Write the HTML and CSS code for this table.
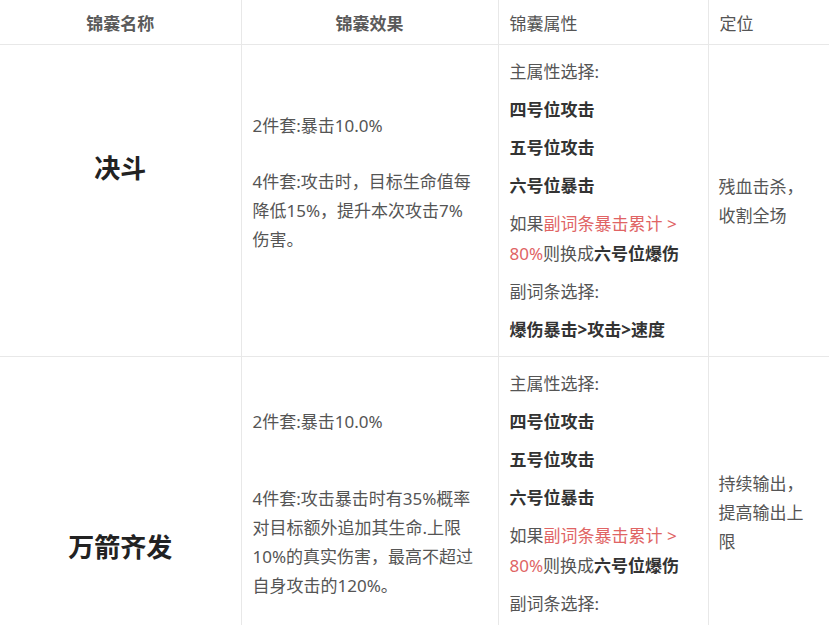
FILE: index.html
```html
<!DOCTYPE html>
<html lang="zh">
<head>
<meta charset="utf-8">
<title>锦囊</title>
<link rel="stylesheet" href="styles.css">
</head>
<body>
<table class="grid">
  <colgroup>
    <col class="c-name">
    <col class="c-effect">
    <col class="c-attr">
    <col class="c-role">
  </colgroup>
  <thead>
    <tr>
      <th class="h-center">锦囊名称</th>
      <th class="h-center">锦囊效果</th>
      <th class="h-left">锦囊属性</th>
      <th class="h-left">定位</th>
    </tr>
  </thead>
  <tbody>
    <tr>
      <td class="name name-a">决斗</td>
      <td class="effect effect-a">
        <p class="set2 set2-a">2件套:暴击10.0%</p>
        <p>4件套:攻击时，目标生命值每<br>降低15%，提升本次攻击7%<br>伤害。</p>
      </td>
      <td class="attr">
        <p>主属性选择:</p>
        <p class="strong">四号位攻击</p>
        <p class="strong">五号位攻击</p>
        <p class="strong">六号位暴击</p>
        <p>如果<span class="red">副词条暴击累计 &gt;<br>80%</span>则换成<span class="strong">六号位爆伤</span></p>
        <p>副词条选择:</p>
        <p class="strong">爆伤暴击&gt;攻击&gt;速度</p>
      </td>
      <td class="role">残血击杀，<br>收割全场</td>
    </tr>
    <tr>
      <td class="name name-b">万箭齐发</td>
      <td class="effect effect-b">
        <p class="set2 set2-b">2件套:暴击10.0%</p>
        <p>4件套:攻击暴击时有35%概率<br>对目标额外追加其生命.上限<br>10%的真实伤害，最高不超过<br>自身攻击的120%。</p>
      </td>
      <td class="attr">
        <p>主属性选择:</p>
        <p class="strong">四号位攻击</p>
        <p class="strong">五号位攻击</p>
        <p class="strong">六号位暴击</p>
        <p>如果<span class="red">副词条暴击累计 &gt;<br>80%</span>则换成<span class="strong">六号位爆伤</span></p>
        <p>副词条选择:</p>
        <p class="strong">爆伤暴击&gt;攻击&gt;速度</p>
      </td>
      <td class="role">持续输出，<br>提高输出上<br>限</td>
    </tr>
  </tbody>
</table>
</body>
</html>
```

FILE: styles.css
```css
html, body {
  margin: 0;
  padding: 0;
  background: #ffffff;
}

body {
  font-family: "Noto Sans", "Noto Sans CJK SC", sans-serif;
  font-size: 17px;
  color: #555555;
}

.grid {
  width: 829px;
  table-layout: fixed;
  border-collapse: collapse;
}

.c-name { width: 241px; }
.c-effect { width: 257px; }
.c-attr { width: 210px; }
.c-role { width: 121px; }

.grid th,
.grid td {
  border-right: 1px solid #e8e8e8;
  border-bottom: 1px solid #e8e8e8;
  padding: 0;
}

.grid th:last-child,
.grid td:last-child {
  border-right: 1px solid #b8b8b8;
}

.grid th {
  height: 44px;
  font-weight: 400;
  color: #555555;
  vertical-align: middle;
}

.h-center {
  text-align: center;
  font-weight: 700 !important;
  color: #5a5a5a !important;
}

.h-left {
  text-align: left;
  padding-left: 11px !important;
}

.grid p {
  margin: 0;
}

.name {
  text-align: center;
  vertical-align: top;
  font-size: 26px;
  line-height: 36px;
  font-weight: 700;
  color: #222222;
}

.name-a { padding-top: 105px !important; }
.name-b { padding-top: 172px !important; }

.effect {
  vertical-align: top;
  padding-left: 11px !important;
  line-height: 29px;
  color: #555555;
}

.effect-a { padding-top: 66px !important; }
.effect-b { padding-top: 50px !important; }

.set2-a { margin-bottom: 27px !important; }
.set2-b { margin-bottom: 48px !important; }

.attr {
  vertical-align: top;
  padding: 12px 8px 11px 11px !important;
  line-height: 30px;
  color: #555555;
}

.attr p {
  margin-bottom: 8px;
}

.attr p:last-child {
  margin-bottom: 0;
}

.strong {
  font-weight: 700;
  color: #333333;
}

.red {
  color: #e06464;
}

.role {
  vertical-align: middle;
  padding-left: 10px !important;
  line-height: 29px;
  color: #555555;
}
```
